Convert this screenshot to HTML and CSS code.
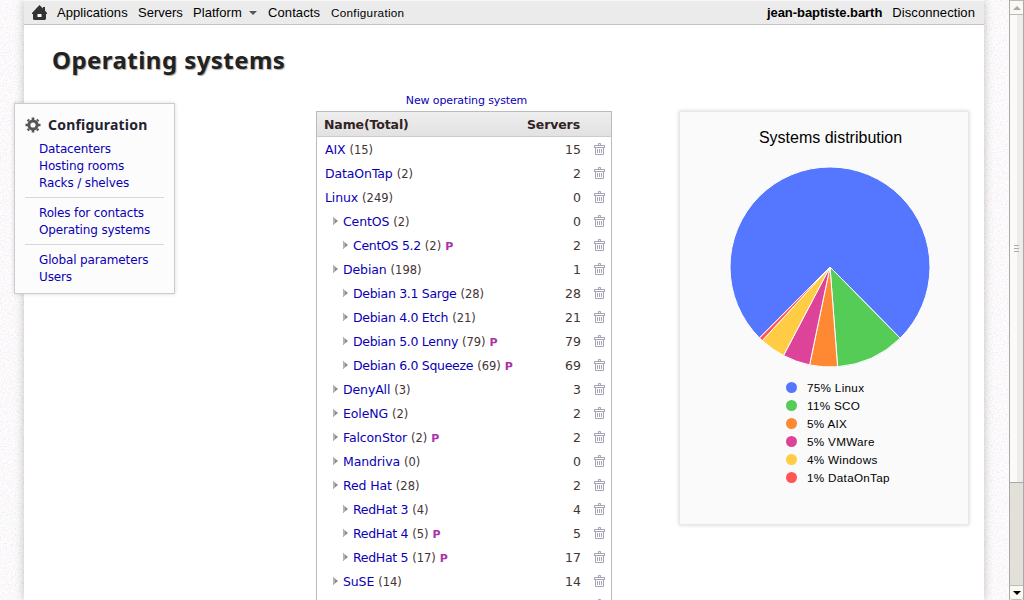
FILE: index.html
```html
<!DOCTYPE html>
<html lang="en">
<head>
<meta charset="utf-8">
<title>Operating systems</title>
<link rel="stylesheet" href="styles.css">
</head>
<body>
<svg class="defs" aria-hidden="true">
  <symbol id="trash" viewBox="0 0 11 12"><path d="M.5 4V2.500H10.500V4M4.500 2V.5H6.500V2M0 4.500H11M1.500 4.500V11.500H9.500V4.500M3.500 6V10M5.500 6V10M7.500 6V10" fill="none" stroke="#a4a4b2"/></symbol>
  <symbol id="arrow" viewBox="0 0 5 8"><path d="M0 0L5 4L0 8z" fill="#888"/><path d="M.5 0V8M1.500 1V7" stroke="#b4b4b4"/></symbol>
</svg>
<svg class="noise" aria-hidden="true">
  <filter id="grain" x="0" y="0" width="100%" height="100%" color-interpolation-filters="sRGB">
    <feTurbulence type="fractalNoise" baseFrequency=".65" numOctaves="2" seed="4"/>
    <feColorMatrix values=".22 0 0 0 .88  0 .22 0 0 .87  0 0 .22 0 .88  0 0 0 0 1"/>
  </filter>
  <rect width="100%" height="100%" filter="url(#grain)"/>
</svg>
<div class="window">
  <div class="page">
    <nav class="topbar">
      <svg class="home" viewBox="0 0 16 16"><path d="M7.500 0L11 3.500V2H13V5.500L15 8V9H14V14L13 15H2L1 14V9H0V8z" fill="#333"/><path d="M5.500 9h4v3h-4z" fill="#fff"/></svg>
      <a class="apps">Applications</a><a class="servers">Servers</a><a class="platform">Platform</a><i class="caret"></i><a class="contacts">Contacts</a><a class="current">Configuration</a>
      <b class="user">jean-baptiste.barth</b><a class="logout">Disconnection</a>
    </nav>
    <h1>Operating systems</h1>
    <div class="content">
      <aside class="sidebar">
        <h2><svg class="gear" viewBox="-8 -8 16 16"><circle r="4.100" fill="none" stroke="#555" stroke-width="3"/><g stroke="#555" stroke-width="2.600"><path d="M0-7.500V-5M0 7.500V5M-7.500 0H-5M7.500 0H5M-5.300-5.300L-4-4M5.300 5.300L4 4M-5.300 5.300L-4 4M5.300-5.300L4-4"/></g></svg><span>Configuration</span></h2>
        <ul><li><a>Datacenters</a></li><li><a>Hosting rooms</a></li><li><a>Racks / shelves</a></li></ul>
        <ul><li><a>Roles for contacts</a></li><li><a>Operating systems</a></li></ul>
        <ul><li><a>Global parameters</a></li><li><a>Users</a></li></ul>
      </aside>
      <main class="systems">
        <div class="new"><a>New operating system</a></div>
        <div class="table">
          <div class="head"><span>Name(Total)</span><span>Servers</span></div>
          <div class="row"><span class="name"><a>AIX</a> <small>(15)</small></span><span>15</span><svg><use href="#trash"/></svg></div>
          <div class="row"><span class="name"><a>DataOnTap</a> <small>(2)</small></span><span>2</span><svg><use href="#trash"/></svg></div>
          <div class="row"><span class="name"><a>Linux</a> <small>(249)</small></span><span>0</span><svg><use href="#trash"/></svg></div>
          <div class="row sub"><svg class="arrow"><use href="#arrow"/></svg><span class="name"><a>CentOS</a> <small>(2)</small></span><span>0</span><svg><use href="#trash"/></svg></div>
          <div class="row leaf"><svg class="arrow"><use href="#arrow"/></svg><span class="name"><a>CentOS 5.2</a> <small>(2)</small> <b>P</b></span><span>2</span><svg><use href="#trash"/></svg></div>
          <div class="row sub"><svg class="arrow"><use href="#arrow"/></svg><span class="name"><a>Debian</a> <small>(198)</small></span><span>1</span><svg><use href="#trash"/></svg></div>
          <div class="row leaf"><svg class="arrow"><use href="#arrow"/></svg><span class="name"><a>Debian 3.1 Sarge</a> <small>(28)</small></span><span>28</span><svg><use href="#trash"/></svg></div>
          <div class="row leaf"><svg class="arrow"><use href="#arrow"/></svg><span class="name"><a>Debian 4.0 Etch</a> <small>(21)</small></span><span>21</span><svg><use href="#trash"/></svg></div>
          <div class="row leaf"><svg class="arrow"><use href="#arrow"/></svg><span class="name"><a>Debian 5.0 Lenny</a> <small>(79)</small> <b>P</b></span><span>79</span><svg><use href="#trash"/></svg></div>
          <div class="row leaf"><svg class="arrow"><use href="#arrow"/></svg><span class="name"><a>Debian 6.0 Squeeze</a> <small>(69)</small> <b>P</b></span><span>69</span><svg><use href="#trash"/></svg></div>
          <div class="row sub"><svg class="arrow"><use href="#arrow"/></svg><span class="name"><a>DenyAll</a> <small>(3)</small></span><span>3</span><svg><use href="#trash"/></svg></div>
          <div class="row sub"><svg class="arrow"><use href="#arrow"/></svg><span class="name"><a>EoleNG</a> <small>(2)</small></span><span>2</span><svg><use href="#trash"/></svg></div>
          <div class="row sub"><svg class="arrow"><use href="#arrow"/></svg><span class="name"><a>FalconStor</a> <small>(2)</small> <b>P</b></span><span>2</span><svg><use href="#trash"/></svg></div>
          <div class="row sub"><svg class="arrow"><use href="#arrow"/></svg><span class="name"><a>Mandriva</a> <small>(0)</small></span><span>0</span><svg><use href="#trash"/></svg></div>
          <div class="row sub"><svg class="arrow"><use href="#arrow"/></svg><span class="name"><a>Red Hat</a> <small>(28)</small></span><span>2</span><svg><use href="#trash"/></svg></div>
          <div class="row leaf"><svg class="arrow"><use href="#arrow"/></svg><span class="name"><a>RedHat 3</a> <small>(4)</small></span><span>4</span><svg><use href="#trash"/></svg></div>
          <div class="row leaf"><svg class="arrow"><use href="#arrow"/></svg><span class="name"><a>RedHat 4</a> <small>(5)</small> <b>P</b></span><span>5</span><svg><use href="#trash"/></svg></div>
          <div class="row leaf"><svg class="arrow"><use href="#arrow"/></svg><span class="name"><a>RedHat 5</a> <small>(17)</small> <b>P</b></span><span>17</span><svg><use href="#trash"/></svg></div>
          <div class="row sub"><svg class="arrow"><use href="#arrow"/></svg><span class="name"><a>SuSE</a> <small>(14)</small></span><span>14</span><svg><use href="#trash"/></svg></div>
          <div class="row"><span class="name"></span><svg><use href="#trash"/></svg></div>
        </div>
      </main>
      <section class="chart">
        <h3>Systems distribution</h3>
        <svg class="pie" viewBox="-101 -101 202 202" stroke="#fff" stroke-width="1" stroke-linejoin="bevel">
          <path fill="#57f" d="M0 0L-70.500 70.900A100 100 0 1 1 70.200 71.200z"/>
          <path fill="#5c5" d="M0 0L70.200 71.200A100 100 0 0 1 7.600 99.700z"/>
          <path fill="#f83" d="M0 0L7.600 99.700A100 100 0 0 1-20.400 97.900z"/>
          <path fill="#d49" d="M0 0L-20.400 97.900A100 100 0 0 1-46.500 88.500z"/>
          <path fill="#fc4" d="M0 0L-46.500 88.500A100 100 0 0 1-67.700 73.600z"/>
          <path fill="#f55" d="M0 0L-67.700 73.600A100 100 0 0 1-70.500 70.900z"/>
        </svg>
        <ul class="legend">
          <li class="linux">75% Linux</li><li class="sco">11% SCO</li><li class="aix">5% AIX</li><li class="vmware">5% VMWare</li><li class="win">4% Windows</li><li class="tap">1% DataOnTap</li>
        </ul>
      </section>
    </div>
  </div>
  <div class="scrollbar">
    <div class="up"><i></i></div>
    <div class="thumb"><i></i><i></i><i></i></div>
    <div class="track"></div>
    <div class="down"><i></i></div>
  </div>
</div>
</body>
</html>
```

FILE: styles.css
```css
* { box-sizing: border-box; }
body { margin: 0; width: 1024px; height: 600px; overflow: hidden; background: #fafafa; font-family: "DejaVu Sans", sans-serif; color: #433; }
h1, h2, h3, ul { margin: 0; padding: 0; }
ul { list-style: none; }
a { color: #0b00b5; white-space: nowrap; }
.defs { position: absolute; width: 0; height: 0; }
.noise { position: absolute; top: 0; left: 0; width: 1009px; height: 600px; }
.window { position: relative; display: flex; justify-content: space-between; height: 600px; padding-left: 24px; }
.page { width: 960px; height: 600px; background: #fff; box-shadow: 0 0 9px rgba(0,0,0,.24); }
.topbar { display: flex; align-items: center; height: 25px; padding: 0 9px 0 8px; background: #ebebeb; border-top: 1px solid #f8f8f8; border-bottom: 1px solid #c4c4c4; font: 13px/24px "Liberation Sans", sans-serif; }
.topbar a, .user { color: #000; white-space: nowrap; flex: none; }
.home { width: 16px; height: 16px; margin-right: 9px; }
.apps { width: 81px; letter-spacing: .05px; }
.servers { width: 55px; }
.platform { width: 56px; letter-spacing: .05px; }
.caret { width: 0; margin-right: 11px; border: 4px solid transparent; border-top-color: #555; border-bottom: 0; }
.contacts { width: 63px; letter-spacing: .1px; }
.topbar .current { font-size: 11.700px; letter-spacing: .3px; padding-top: 1px; }
.user { margin-left: auto; margin-right: 10px; letter-spacing: -.05px; }
.logout { letter-spacing: .08px; }
h1 { height: 66px; padding: 17px 0 0 28px; font: bold 24px/36px "Noto Sans", sans-serif; letter-spacing: .45px; color: #222; text-shadow: 1px 1px 1px #aaa; white-space: nowrap; }
.content { display: flex; align-items: flex-start; }
.sidebar { flex: none; width: 161px; height: 191px; margin: 12px 0 0 -10px; padding: 8px 10px; background: #fcfcfc; border: 1px solid #ccc; box-shadow: 0 0 4px rgba(0,0,0,.15); font-size: 12px; line-height: 17px; letter-spacing: -.14px; }
.sidebar h2 { display: flex; align-items: center; height: 28px; font: bold 14px/24px "Noto Sans", sans-serif; letter-spacing: .2px; color: #223; padding-bottom: 3px; }
.sidebar h2 span { margin-left: 7px; }
.gear { width: 16px; height: 16px; }
.sidebar ul { padding: 1px 0 5px 14px; width: 139px; }
.sidebar ul + ul { border-top: 1px solid #d8d8d8; padding-top: 7px; }
.systems { flex: none; width: 296px; margin-left: 141px; }
.new { height: 20px; padding-left: 5px; text-align: center; font-size: 11px; line-height: 19px; letter-spacing: -.12px; }
.table { height: 489px; overflow: hidden; border: 1px solid #bbb; border-bottom: 0; font-size: 12px; }
.head { display: flex; justify-content: space-between; height: 25px; padding: 0 31px 0 7px; line-height: 25px; font-size: 12.500px; letter-spacing: -.12px; font-weight: bold; color: #322; background: linear-gradient(#eee, #e2e2e2); border-bottom: 1px solid #ccc; }
.row { display: flex; align-items: center; height: 24px; padding: 0 6px 0 8px; line-height: 22px; font-size: 12.500px; }
.row > span { padding-top: 2px; }
.row svg { flex: none; width: 11px; height: 12px; margin-left: 13px; }
.row .arrow { width: 5px; height: 8px; margin: 0 5px 0 0; }
.row .name { margin-right: auto; white-space: nowrap; }
.name a { letter-spacing: -.12px; }
.leaf .name a { letter-spacing: -.3px; }
.name small { font-size: 11.500px; }
.name b { font-size: 11px; color: #a3a; }
.sub { padding-left: 16px; }
.leaf { padding-left: 26px; }
.chart { flex: none; width: 290px; height: 414px; margin: 20px 0 0 67px; background: #fafafa; border: 1px solid #e8e8e8; box-shadow: 0 0 4px rgba(0,0,0,.18); font-family: "Liberation Sans", sans-serif; color: #000; }
h3 { height: 54px; padding: 14px 0 0 13px; text-align: center; font-size: 16px; line-height: 24px; font-weight: normal; }
.pie { display: block; width: 202px; height: 202px; margin-left: 49px; }
.legend { padding: 10px 0 0 106px; }
.legend li { display: flex; align-items: center; height: 18px; font-size: 11.700px; letter-spacing: .3px; white-space: nowrap; }
.legend li::before { content: ""; width: 11px; height: 11px; margin: 0 10px 0 0; border-radius: 50%; background: #57f; }
.legend .sco::before { background: #5c5; }
.legend .aix::before { background: #f83; }
.legend .vmware::before { background: #d49; }
.legend .win::before { background: #fc4; }
.legend .tap::before { background: #f55; }
.scrollbar { display: flex; flex-direction: column; width: 15px; height: 600px; border: solid #aaa; border-width: 0 1px; background: #fbf9f6; }
.up, .down { display: flex; align-items: center; justify-content: center; height: 15px; border: 1px solid #bbb; border-width: 1px 0; background: #fbf8f2; }
.up i { border: 4px solid transparent; border-top: 0; border-bottom-color: #aaa; }
.thumb { display: flex; flex-direction: column; align-items: center; justify-content: center; gap: 2px; height: 467px; background: linear-gradient(90deg, #fcfaf8 55%, #eeecea 55%); }
.thumb i { width: 5px; height: 1px; background: #aaa; }
.track { flex: 1; background: #e3dfd9; border-top: 1px solid #aaa; }
.down { border-radius: 0 0 3px 3px; }
.down i { border: 4px solid transparent; border-bottom: 0; border-top-color: #000; }
```
